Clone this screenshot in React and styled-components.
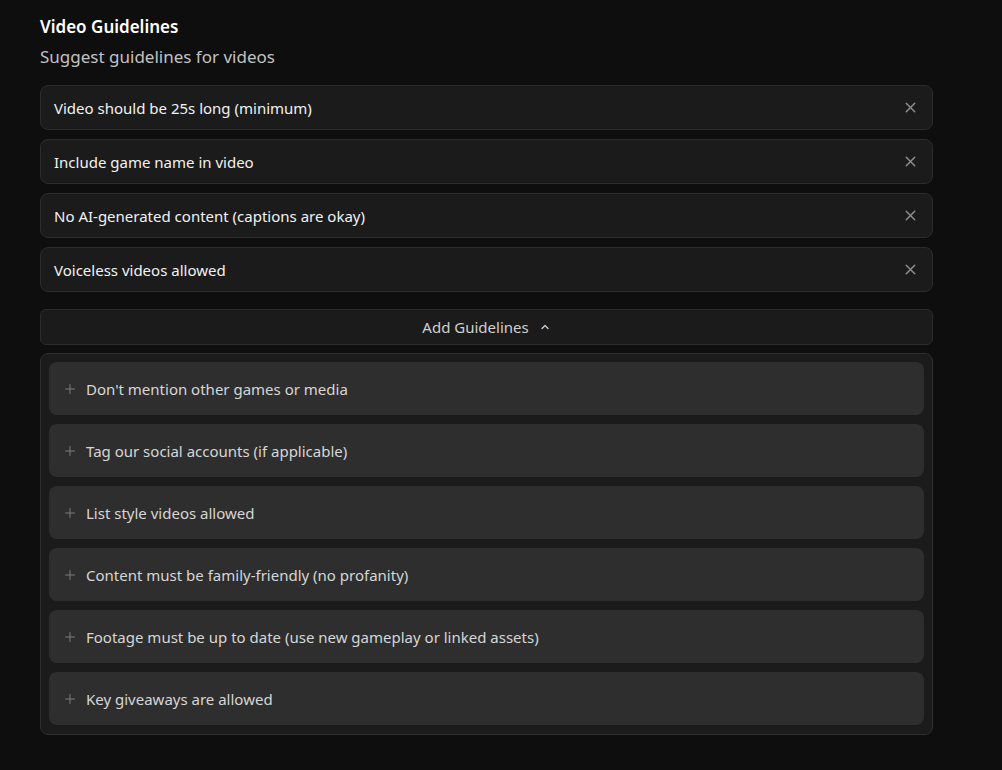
import styled, { createGlobalStyle } from 'styled-components'

const GlobalStyle = createGlobalStyle`
  html, body {
    margin: 0;
    padding: 0;
    background: #0e0e0e;
  }
  body {
    font-family: "Noto Sans", "Open Sans", sans-serif;
  }
`

const Page = styled.div`
  padding: 16px 69px 30px 40px;
  min-height: 724px;
  background: #0e0e0e;
`

const Title = styled.h2`
  margin: 0;
  color: #ffffff;
  font-size: 17px;
  font-weight: 600;
  line-height: 22px;
`

const Subtitle = styled.p`
  margin: 8px 0 0;
  color: #c2c2c2;
  font-size: 17px;
  line-height: 22px;
`

const List = styled.div`
  display: flex;
  flex-direction: column;
  gap: 9px;
  margin-top: 17px;
`

const Item = styled.div`
  display: flex;
  align-items: center;
  justify-content: space-between;
  height: 45px;
  box-sizing: border-box;
  padding: 0 13px 0 13px;
  background: #1b1b1b;
  border: 1px solid #2c2c2c;
  border-radius: 8px;
  color: #f2f2f2;
  font-size: 15px;
`

const IconButton = styled.button`
  display: flex;
  align-items: center;
  justify-content: center;
  padding: 0;
  border: none;
  background: none;
  color: #8f8f8f;
  cursor: pointer;
`

const AddButton = styled.button`
  display: flex;
  align-items: center;
  justify-content: center;
  gap: 10px;
  width: 100%;
  height: 36px;
  margin-top: 17px;
  background: #1b1b1b;
  border: 1px solid #2c2c2c;
  border-radius: 6px;
  color: #d0d0d0;
  font-family: inherit;
  font-size: 15px;
  cursor: pointer;
`

const Panel = styled.div`
  display: flex;
  flex-direction: column;
  gap: 9px;
  margin-top: 8px;
  padding: 8px 8px 9px;
  background: #1b1b1b;
  border: 1px solid #2e2e2e;
  border-radius: 8px;
`

const Suggestion = styled.div`
  display: flex;
  align-items: center;
  gap: 10px;
  height: 53px;
  padding: 0 15px;
  background: #2e2e2e;
  border-radius: 8px;
  color: #d6d6d6;
  font-size: 15px;
  cursor: pointer;
`

const Close = () => (
  <svg width="17" height="17" viewBox="0 0 24 24" fill="none" stroke="currentColor" strokeWidth="2" strokeLinecap="round">
    <path d="M6 6l12 12M18 6L6 18" />
  </svg>
)

const ChevronUp = () => (
  <svg width="12" height="12" viewBox="0 0 24 24" fill="none" stroke="currentColor" strokeWidth="2.6" strokeLinecap="round" strokeLinejoin="round">
    <path d="M6 15l6-6 6 6" />
  </svg>
)

const Plus = () => (
  <svg width="12" height="12" viewBox="0 0 24 24" fill="none" stroke="#7a7a7a" strokeWidth="2" strokeLinecap="round">
    <path d="M12 3v18M3 12h18" />
  </svg>
)

const guidelines = [
  'Video should be 25s long (minimum)',
  'Include game name in video',
  'No AI-generated content (captions are okay)',
  'Voiceless videos allowed',
]

const suggestions = [
  "Don't mention other games or media",
  'Tag our social accounts (if applicable)',
  'List style videos allowed',
  'Content must be family-friendly (no profanity)',
  'Footage must be up to date (use new gameplay or linked assets)',
  'Key giveaways are allowed',
]

const App = () => {
  return (
    <Page>
      <GlobalStyle />
      <Title>Video Guidelines</Title>
      <Subtitle>Suggest guidelines for videos</Subtitle>
      <List>
        {guidelines.map((g) => (
          <Item key={g}>
            <span>{g}</span>
            <IconButton><Close /></IconButton>
          </Item>
        ))}
      </List>
      <AddButton>
        Add Guidelines
        <ChevronUp />
      </AddButton>
      <Panel>
        {suggestions.map((s) => (
          <Suggestion key={s}>
            <Plus />
            <span>{s}</span>
          </Suggestion>
        ))}
      </Panel>
    </Page>
  )
}

export default App
